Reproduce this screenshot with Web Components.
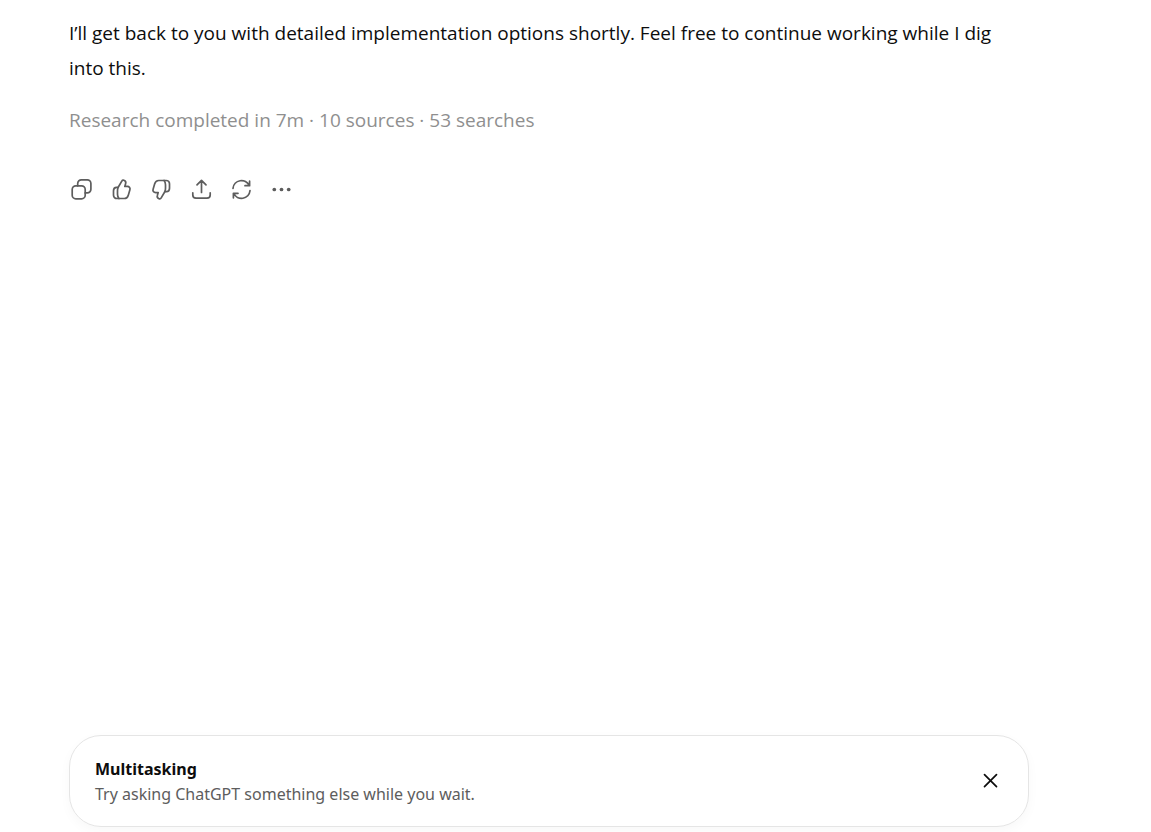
<!DOCTYPE html>
<html lang="en">
<head>
<meta charset="utf-8">
<meta name="viewport" content="width=device-width, initial-scale=1">
<title>Research chat</title>
<style>
  body { margin: 0; background: #fff; color: #0d0d0d; font-family: "Segoe UI", "Open Sans", sans-serif; }
</style>
</head>
<body>
<chat-page>
  <chat-message>
    I’ll get back to you with detailed implementation options shortly. Feel free to continue working while I dig into this.
    <span slot="status">Research completed in 7m · 10 sources · 53 searches</span>
  </chat-message>
  <message-actions></message-actions>
  <tip-card slot="footer">
    <span slot="title">Multitasking</span>
    Try asking ChatGPT something else while you wait.
  </tip-card>
</chat-page>
<script>
const define = (name, html, setup) => customElements.define(name, class extends HTMLElement {
  constructor() {
    super();
    this.attachShadow({ mode: "open" }).innerHTML = html;
    if (setup) setup(this);
  }
});

define("chat-page", `
  <style>
    :host { display: flex; flex-direction: column; justify-content: space-between; box-sizing: border-box;
            min-height: 100vh; padding: 16px 122px 5px 69px; }
    main { display: flex; flex-direction: column; gap: 39px; }
  </style>
  <main><slot></slot></main>
  <slot name="footer"></slot>`);

define("chat-message", `
  <style>
    :host { display: block; font-size: 19px; line-height: 35px; }
    p { margin: 0; }
    .status { margin-top: 17px; color: #8f8f8f; }
  </style>
  <p><slot></slot></p>
  <p class="status"><slot name="status"></slot></p>`);

const thumb = `<path d="M9.2 10.3 12.8 4.1c.5-.9 1.3-1.2 2.2-.8 1.5.6 2.1 1.9 1.6 3.4L15.8 9.4h2.5c2.1 0 3.2 1.5 2.6 3.4l-1.6 5.4c-.6 2.1-1.9 3.3-4 3.3H7.8a3.3 3.3 0 0 1-3.3-3.3v-4.5c0-1.9 1.2-3.4 3.1-3.4h1.6"/><path d="M9.2 10.3c-.5 1-.7 2.1-.7 3.4v3.6c0 1.6.4 3 1.4 4.2"/>`;
const icons = {
  "Copy": `<rect x="3.2" y="8.8" width="13" height="13" rx="3.6"/><path d="M8.7 8.8V6.5a3.6 3.6 0 0 1 3.6-3.6h6a3.6 3.6 0 0 1 3.6 3.6v5.8a3.6 3.6 0 0 1-3.6 3.6h-2.1"/>`,
  "Good response": thumb,
  "Bad response": `<g transform="rotate(180 12.5 12.5)">${thumb}</g>`,
  "Share": `<path d="M12.5 15.5V3.6M8 7.9l4.5-4.5L17 7.9M3.8 15.8v2.1a3.2 3.2 0 0 0 3.2 3.2h11a3.2 3.2 0 0 0 3.2-3.2v-2.1"/>`,
  "Try again": `<path d="M4 11.3A8.5 8.5 0 0 1 20.2 8.6M20.6 4.2v4.5H16M21 13.7A8.5 8.5 0 0 1 4.8 16.4M4.4 20.8v-4.5H9"/>`,
  "More actions": `<g fill="currentColor" stroke="none"><circle cx="5.3" cy="12.5" r="1.85"/><circle cx="12.5" cy="12.5" r="1.85"/><circle cx="19.7" cy="12.5" r="1.85"/></g>`
};

define("message-actions", `
  <style>
    :host { display: flex; gap: 15px; color: #5d5d5d; }
    button { display: block; padding: 0; border: 0; background: none; color: inherit; cursor: pointer; }
    svg { display: block; width: 25px; height: 25px; fill: none; stroke: currentColor; stroke-width: 1.7; stroke-linecap: round; stroke-linejoin: round; }
  </style>
  ${Object.entries(icons).map(([label, shape]) =>
    `<button type="button" aria-label="${label}"><svg viewBox="0 0 25 25" aria-hidden="true">${shape}</svg></button>`).join("")}`);

define("tip-card", `
  <style>
    :host { display: flex; align-items: center; justify-content: space-between; gap: 24px;
            padding: 21px 25px 19px; border: 1px solid #e5e5e5; border-radius: 32px;
            box-shadow: 0 4px 12px rgba(0,0,0,.03); font-family: "Segoe UI", "Noto Sans", sans-serif; font-size: 16px; line-height: 25px; }
    h2, p { margin: 0; font-size: inherit; }
    h2 { font-weight: 700; }
    p { color: #5d5d5d; }
    button { padding: 0; border: 0; background: none; color: inherit; cursor: pointer; }
    svg { display: block; width: 25px; height: 25px; fill: none; stroke: currentColor; stroke-width: 1.7; stroke-linecap: round; }
  </style>
  <div><h2><slot name="title"></slot></h2><p><slot></slot></p></div>
  <button type="button" aria-label="Dismiss"><svg viewBox="0 0 25 25" aria-hidden="true"><path d="m6.5 4.7 12 12m0-12-12 12"/></svg></button>`,
  card => card.shadowRoot.querySelector("button").addEventListener("click", () => card.remove()));
</script>
</body>
</html>
